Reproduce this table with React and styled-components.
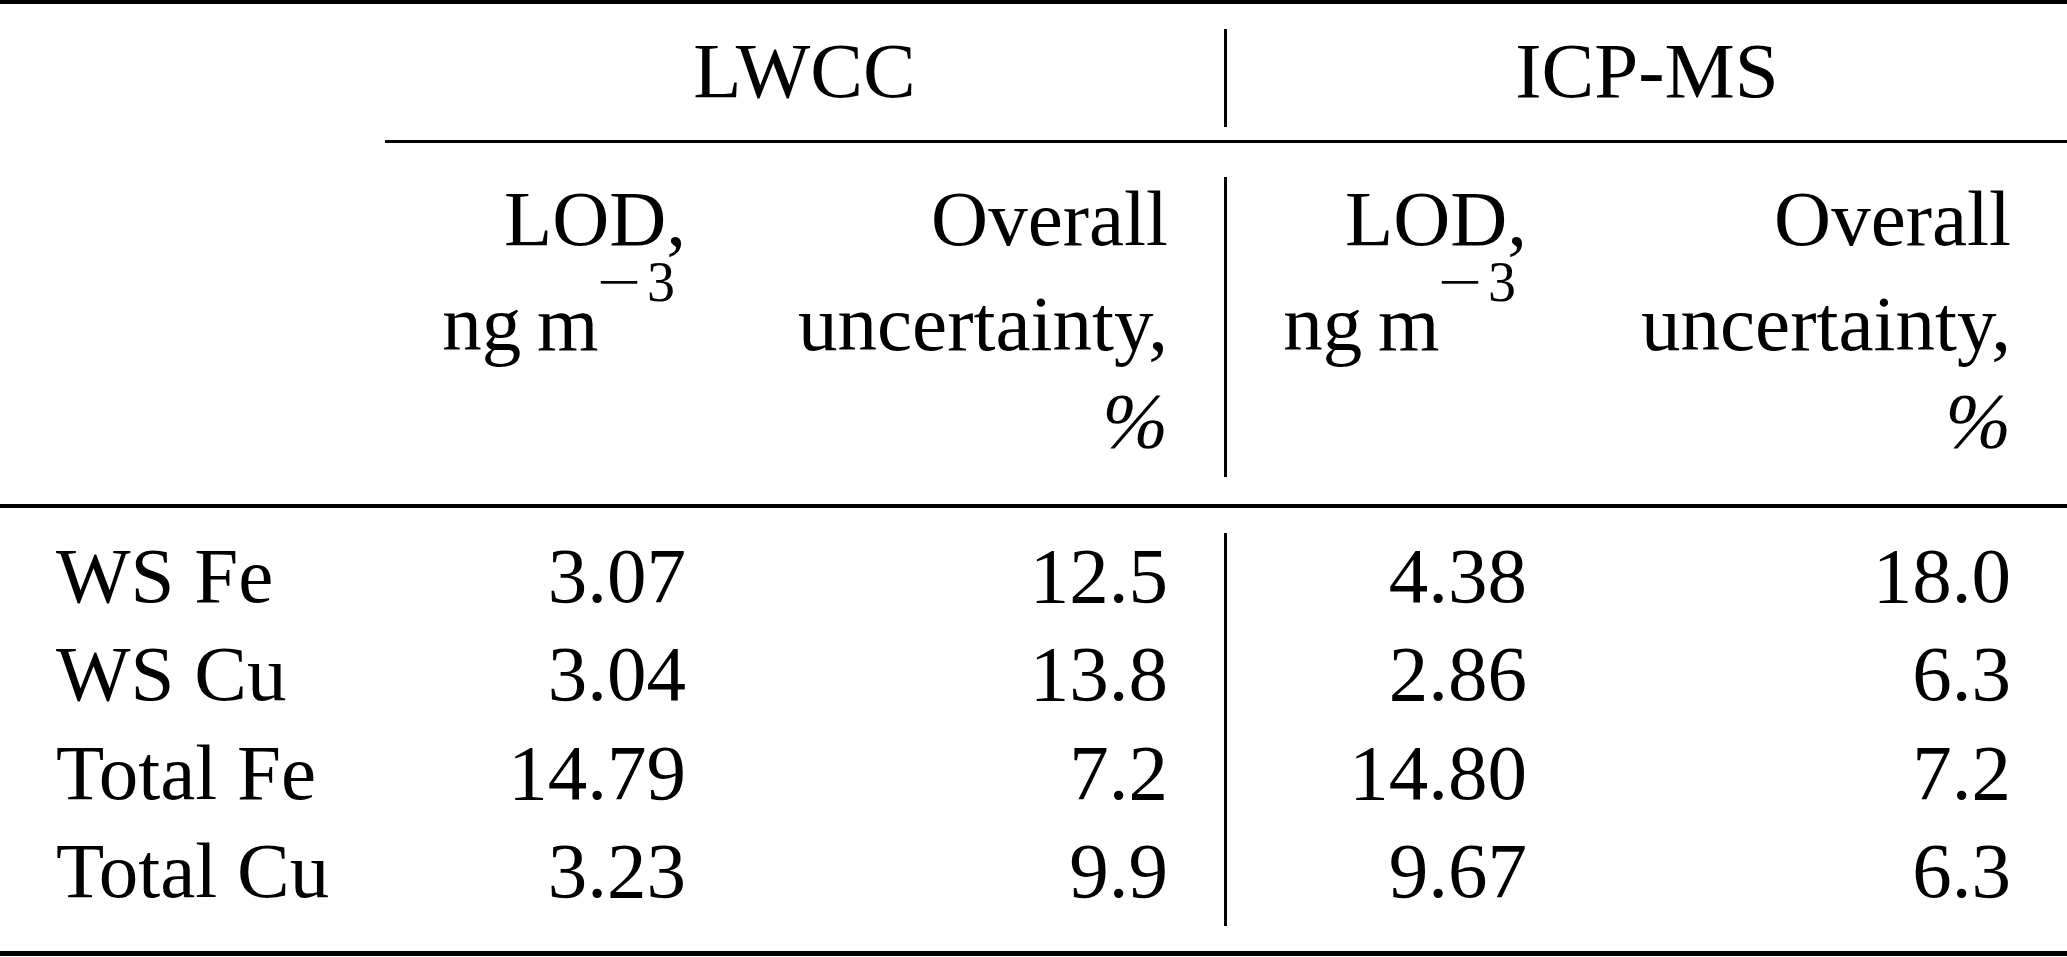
import React from "react";
import styled, { createGlobalStyle } from "styled-components";

const GlobalStyle = createGlobalStyle`
  html, body { margin: 0; padding: 0; background: #ffffff; }
  body { font-family: "Liberation Serif", "Times New Roman", serif; color: #000; }
`;

const COLS = "385px 357px 482px 3px 356px 484px";

const Table = styled.div`
  width: 2067px;
  font-family: "Liberation Serif", "Times New Roman", serif;
  font-size: 79px;
  color: #000;
`;

const HRule = styled.div`
  height: ${(p) => p.$h}px;
  background: #000;
  margin-left: ${(p) => p.$indent || 0}px;
`;

const Section = styled.div`
  display: grid;
  grid-template-columns: ${COLS};
  grid-template-rows: ${(p) => p.$rows};
  padding: ${(p) => p.$pt}px 0 ${(p) => p.$pb}px;
`;

const Cell = styled.div`
  grid-column: ${(p) => p.$col};
  grid-row: ${(p) => p.$row};
  align-self: start;
  line-height: ${(p) => p.$lh}px;
  text-align: ${(p) => p.$align || "right"};
  padding: 0 ${(p) => (p.$flush ? 0 : 56)}px;
  white-space: nowrap;
`;

const VRule = styled.div`
  grid-column: 4;
  grid-row: 1 / -1;
  background: #000;
  margin: ${(p) => p.$mt}px 0 ${(p) => p.$mb}px;
`;

const Sup = styled.span`
  font-size: 56px;
  line-height: 0;
  vertical-align: 49px;
  margin-right: 11px;
`;

const Minus = styled.span`
  display: inline-block;
  transform: scaleX(1.4);
  margin: 0 12px 0 5px;
`;

const Percent = styled.span`
  font-style: italic;
`;

const rows = [
  ["WS Fe", "3.07", "12.5", "4.38", "18.0"],
  ["WS Cu", "3.04", "13.8", "2.86", "6.3"],
  ["Total Fe", "14.79", "7.2", "14.80", "7.2"],
  ["Total Cu", "3.23", "9.9", "9.67", "6.3"],
];

const dataCols = [1, 2, 3, 5, 6];

const Unit = () => (
  <>
    ng{"\u2009"}m
    <Sup>
      <Minus>{"\u2212"}</Minus>3
    </Sup>
  </>
);

export default function App() {
  return (
    <>
      <GlobalStyle />
      <Table>
        <HRule $h={4} />
        <Section $rows="98px" $pt={25} $pb={13}>
          <Cell $col="2 / 4" $row={1} $lh={84.67} $align="center" $flush>
            LWCC
          </Cell>
          <VRule $mt={0} $mb={0} />
          <Cell $col="5 / 7" $row={1} $lh={84.67} $align="center" $flush>
            ICP-MS
          </Cell>
        </Section>
        <HRule $h={3} $indent={385} />
        <Section $rows="100px 110px 98px" $pt={26.3} $pb={26.7}>
          <Cell $col={2} $row={1} $lh={100}>LOD,</Cell>
          <Cell $col={2} $row={2} $lh={110}>
            <Unit />
          </Cell>
          <Cell $col={3} $row={1} $lh={100}>Overall</Cell>
          <Cell $col={3} $row={2} $lh={110}>uncertainty,</Cell>
          <Cell $col={3} $row={3} $lh={84}>
            <Percent>%</Percent>
          </Cell>
          <VRule $mt={7.7} $mb={0} />
          <Cell $col={5} $row={1} $lh={100}>LOD,</Cell>
          <Cell $col={5} $row={2} $lh={110}>
            <Unit />
          </Cell>
          <Cell $col={6} $row={1} $lh={100}>Overall</Cell>
          <Cell $col={6} $row={2} $lh={110}>uncertainty,</Cell>
          <Cell $col={6} $row={3} $lh={84}>
            <Percent>%</Percent>
          </Cell>
        </Section>
        <HRule $h={4} />
        <Section $rows="repeat(4, 98.3px)" $pt={19.2} $pb={30.6}>
          {rows.map((r, i) =>
            r.map((v, j) => (
              <Cell
                key={`${i}-${j}`}
                $col={dataCols[j]}
                $row={i + 1}
                $lh={98.3}
                $align={j === 0 ? "left" : "right"}
              >
                {v}
              </Cell>
            ))
          )}
          <VRule $mt={5.8} $mb={-5.6} />
        </Section>
        <HRule $h={5} />
      </Table>
    </>
  );
}
